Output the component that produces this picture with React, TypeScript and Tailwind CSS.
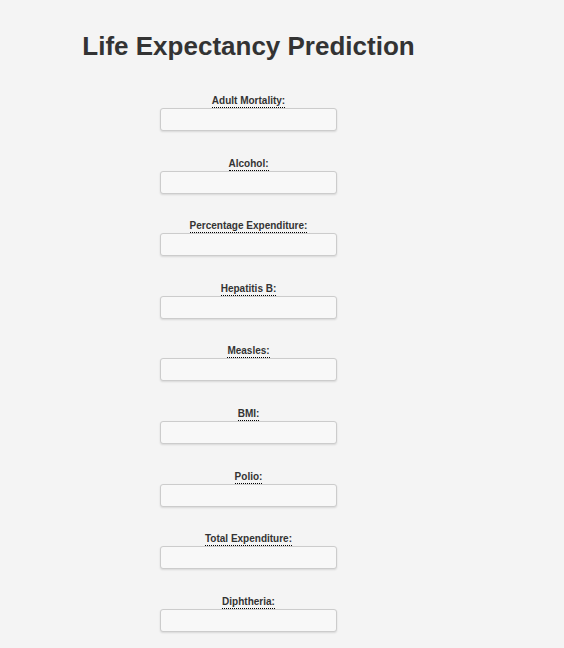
const fields = [
  "Adult Mortality:",
  "Alcohol:",
  "Percentage Expenditure:",
  "Hepatitis B:",
  "Measles:",
  "BMI:",
  "Polio:",
  "Total Expenditure:",
  "Diphtheria:",
]

export default function App() {
  return (
    <div className="min-h-[648px] bg-[#f4f4f4] text-[#333]" style={{ fontFamily: '"Liberation Sans", Arial, sans-serif' }}>
      <div className="w-[497px] flex flex-col items-center pt-[31px]">
        <h1 className="text-[26px] font-bold leading-[30px] mb-[34px]">Life Expectancy Prediction</h1>

        {/* Form */}
        <form className="flex flex-col items-center">
          {fields.map((f) => (
            <div key={f} className="flex flex-col items-center mb-[26.6px]">
              <label className="text-[10px] font-bold leading-[11px] pb-[1px] border-b border-dotted border-black">
                {f}
              </label>
              <input
                type="text"
                className="w-[177px] h-[23px] bg-[#f8f8f8] border border-[#ccc] rounded-[3px] shadow-[0_1px_2px_rgba(0,0,0,0.12)] outline-none"
              />
            </div>
          ))}
        </form>
      </div>
    </div>
  )
}
